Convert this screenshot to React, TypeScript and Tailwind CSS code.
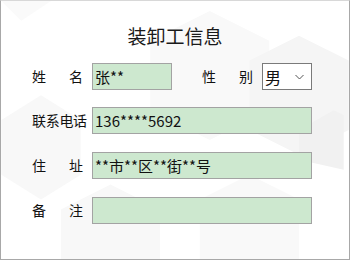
import React from 'react';

const FONT = "font-['Microsoft_YaHei','Noto_Sans_CJK_SC',sans-serif]";

const INPUT =
  'h-[27px] border border-[#a3a3a3] bg-[#cde8cf] pl-[2px] text-[15px] leading-[25px] text-[#111] flex items-center';

// faint hexagon watermark behind the form
const Backdrop = () => (
  <svg className="absolute inset-0 h-full w-full" viewBox="0 0 350 260" aria-hidden>
    <polygon points="0,120 40,95 80,120 80,175 40,200 0,175" fill="#f8f8f8" />
    <polygon points="150,40 210,10 270,40 270,110 210,140 150,110" fill="#f9f9f9" />
    <polygon points="250,60 300,35 350,60 350,130 300,155 250,130" fill="#f5f5f5" />
    <polygon points="300,130 335,110 345,115 345,170 300,160" fill="#f1f1f1" />
    <polygon points="60,210 110,185 160,210 160,260 60,260" fill="#f8f8f8" />
    <polygon points="200,200 250,175 300,200 300,260 200,260" fill="#f9f9f9" />
    <polygon points="0,0 50,0 20,20" fill="#fafafa" />
  </svg>
);

const Label = ({ a, b }: { a: string; b: string }) => (
  <div className="flex w-[51px] justify-between text-[14px] text-[#111]">
    <span>{a}</span>
    <span>{b}</span>
  </div>
);

export default function App() {
  return (
    <div
      className={`relative h-[260px] w-[350px] overflow-hidden border border-[#a8a8a8] border-t-[#d8d8d8] bg-white ${FONT}`}
    >
      <Backdrop />
      <div className="relative flex flex-col">
        <h1 className="mt-[23px] text-center text-[19px] leading-[24px] text-[#1a1a1a]">
          装卸工信息
        </h1>

        {/* 姓名 / 性别 */}
        <div className="mt-[15px] flex items-center pl-[31px]">
          <Label a="姓" b="名" />
          <div className={`ml-[9px] w-[80px] ${INPUT}`}>张**</div>
          <div className="ml-[30px]">
            <Label a="性" b="别" />
          </div>
          <div className="ml-[9px] flex h-[27px] w-[50px] items-center justify-between border border-[#7a7a7a] bg-white pl-[2px] pr-[7px] text-[16px] text-[#111]">
            <span>男</span>
            <svg width="9" height="6" viewBox="0 0 9 6">
              <path d="M0.5 1 L4.5 5 L8.5 1" fill="none" stroke="#555" strokeWidth="1" />
            </svg>
          </div>
        </div>

        {/* 联系电话 */}
        <div className="mt-[17px] flex items-center pl-[31px]">
          <span className="w-[60px] text-[14px] tracking-[-0.3px] text-[#111]">联系电话</span>
          <div className={`w-[220px] ${INPUT}`}>136****5692</div>
        </div>

        {/* 住址 */}
        <div className="mt-[18px] flex items-center pl-[31px]">
          <Label a="住" b="址" />
          <div className={`ml-[9px] w-[220px] ${INPUT}`}>**市**区**街**号</div>
        </div>

        {/* 备注 */}
        <div className="mt-[18px] flex items-center pl-[31px]">
          <Label a="备" b="注" />
          <div className={`ml-[9px] w-[220px] ${INPUT}`}></div>
        </div>
      </div>
    </div>
  );
}
